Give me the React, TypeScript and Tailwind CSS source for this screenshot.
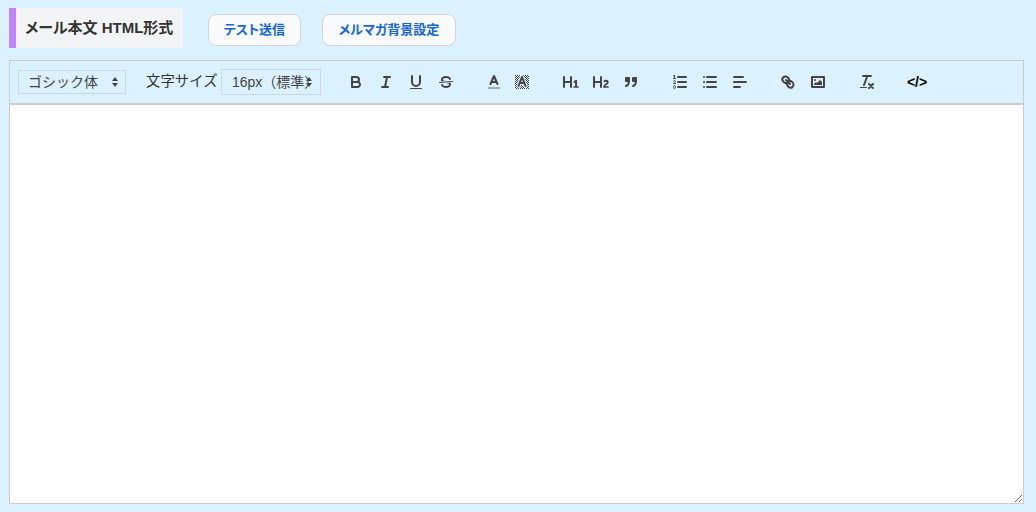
const jpFont = "font-['Liberation_Sans','Noto_Sans_CJK_JP',sans-serif]";

function Icon({ children, className = '' }: { children: React.ReactNode; className?: string }) {
  return (
    <svg
      viewBox="0 0 18 18"
      className={`h-[18px] w-[18px] fill-none stroke-[#444] stroke-2 [stroke-linecap:round] [stroke-linejoin:round] ${className}`}
    >
      {children}
    </svg>
  );
}

function ToolButton({ children, narrow }: { children: React.ReactNode; narrow?: boolean }) {
  return (
    <button type="button" className={`flex h-6 items-center justify-center ${narrow ? 'w-7' : 'w-[30px]'}`}>
      {children}
    </button>
  );
}

function SelectArrows({ className }: { className: string }) {
  return (
    <svg viewBox="0 0 8 12" className={`pointer-events-none absolute h-3 w-2 fill-[#444] ${className}`}>
      <path d="M4 1 7 5H1Z" />
      <path d="M4 11 1 7h6Z" />
    </svg>
  );
}

export default function App() {
  return (
    <div className={`h-[512px] w-[1036px] overflow-hidden bg-[#dbf1fe] ${jpFont}`}>
      <div className="flex items-start pl-[9px] pt-2">
        <h2 className="flex h-10 w-[174px] items-center border-l-[7px] border-[#c084fc] bg-[#f3f4f6] pl-[9px] text-[15px] font-bold text-[#333] [font-feature-settings:'palt']">
          メール本文 HTML形式
        </h2>
        <button
          type="button"
          className="ml-[25px] mt-1.5 h-8 w-[93px] rounded-lg border border-[#d1d5db] bg-[#f8fafc] text-[13px] font-bold text-[#1565d8] [font-feature-settings:'palt']"
        >
          テスト送信
        </button>
        <button
          type="button"
          className="ml-[21px] mt-1.5 h-8 w-[134px] rounded-lg border border-[#d1d5db] bg-[#f8fafc] text-[13px] font-bold text-[#1565d8] [font-feature-settings:'palt']"
        >
          メルマガ背景設定
        </button>
      </div>

      <div className="ml-[9px] mt-3 w-[1015px]">
        <div className="flex h-11 items-center border border-[#ccc] pl-2">
          <div className="relative h-6 w-[108px]">
            <select className="h-full w-full appearance-none border border-[#ccd6e0] bg-transparent pl-[9px] text-sm text-[#444]">
              <option>ゴシック体</option>
            </select>
            <SelectArrows className="right-[7px] top-1.5" />
          </div>
          <span className="ml-5 w-[75px] whitespace-nowrap text-[14.4px] text-[#333]">文字サイズ</span>
          <div className="relative h-[26px] w-[100px]">
            <select className="h-full w-full appearance-none border border-[#ccd6e0] bg-transparent pl-2.5 text-sm text-[#444]">
              <option>16px（標準）</option>
            </select>
            <SelectArrows className="right-[8px] top-[7px]" />
          </div>

          <div className="ml-5 flex">
            <ToolButton>
              <Icon>
                <path d="M5,4H9.5A2.5,2.5,0,0,1,12,6.5v0A2.5,2.5,0,0,1,9.5,9H5A0,0,0,0,1,5,9V4A0,0,0,0,1,5,4Z" />
                <path d="M5,9h5.5A2.5,2.5,0,0,1,13,11.5v0A2.5,2.5,0,0,1,10.5,14H5a0,0,0,0,1,0,0V9A0,0,0,0,1,5,9Z" />
              </Icon>
            </ToolButton>
            <ToolButton>
              <Icon>
                <path d="M7 4h6M5 14h6M8 14l2-10" />
              </Icon>
            </ToolButton>
            <ToolButton>
              <Icon>
                <path d="M5,3V9a4.012,4.012,0,0,0,4,4H9a4.012,4.012,0,0,0,4-4V3" />
                <rect x="3" y="15" width="12" height="1" rx=".5" className="fill-[#444] stroke-none" />
              </Icon>
            </ToolButton>
            <ToolButton>
              <Icon>
                <path d="M15.5 8.5 2.5 9.5" className="stroke-1" />
                <path
                  className="fill-[#444] stroke-none"
                  d="M9.007,8C6.542,7.791,6,7.519,6,6.5,6,5.792,7.283,5,9,5c1.571,0,2.765.679,2.969,1.309a1,1,0,0,0,1.9-.617C13.356,4.106,11.354,3,9,3,6.2,3,4,4.538,4,6.5a3.2,3.2,0,0,0,.5,1.843Z"
                />
                <path
                  className="fill-[#444] stroke-none"
                  d="M8.984,10C11.457,10.208,12,10.479,12,11.5c0,.708-1.283,1.5-3,1.5-1.571,0-2.765-.679-2.969-1.309a1,1,0,1,0-1.9.617C4.644,13.894,6.646,15,9,15c2.8,0,5-1.538,5-3.5a3.2,3.2,0,0,0-.5-1.843Z"
                />
              </Icon>
            </ToolButton>
          </div>

          <div className="ml-[19px] flex">
            <ToolButton narrow>
              <Icon>
                <path d="M3 15h12" className="stroke-[#aaa] [stroke-linecap:butt]" />
                <path d="M5.5 11 9 3l3.5 8M11.63 9H6.38" />
              </Icon>
            </ToolButton>
            <ToolButton narrow>
              <Icon>
                <defs>
                  <pattern id="hatch" width="2" height="2" patternUnits="userSpaceOnUse">
                    <rect width="1" height="1" fill="#444" stroke="none" />
                    <rect x="1" y="1" width="1" height="1" fill="#444" stroke="none" />
                  </pattern>
                </defs>
                <rect x="2" y="2" width="14" height="14" className="fill-[url(#hatch)] stroke-none" />
                <path d="M5.5 13 9 4l3.5 9M11.4 10H6.6" className="stroke-[#dbf1fe] stroke-[4]" />
                <path d="M5.5 13 9 4l3.5 9M11.4 10H6.6" />
              </Icon>
            </ToolButton>
          </div>

          <div className="ml-5 flex">
            <ToolButton>
              <Icon>
                <path
                  className="fill-[#444] stroke-none"
                  d="M10,4V14a1,1,0,0,1-2,0V10H3v4a1,1,0,0,1-2,0V4A1,1,0,0,1,3,4V8H8V4a1,1,0,0,1,2,0Zm6.06787,9.209H14.98975V7.59863a.54085.54085,0,0,0-.605-.60547h-.62744a1.01119,1.01119,0,0,0-.748.29688L11.645,8.56641a.5435.5435,0,0,0-.022.8584l.28613.30762a.53861.53861,0,0,0,.84717.0332l.09912-.08789a1.2137,1.2137,0,0,0,.2417-.35254h.02246s-.01123.30859-.01123.60547V13.209H12.041a.54085.54085,0,0,0-.605.60547v.43945a.54085.54085,0,0,0,.605.60547h4.02686a.54085.54085,0,0,0,.605-.60547v-.43945A.54085.54085,0,0,0,16.06787,13.209Z"
                />
              </Icon>
            </ToolButton>
            <ToolButton>
              <Icon>
                <path
                  className="fill-[#444] stroke-none"
                  d="M16.73975,13.81445v.43945a.54085.54085,0,0,1-.605.60547H11.855a.58392.58392,0,0,1-.64893-.60547V14.0127c0-2.90527,3.39941-3.42187,3.39941-4.55469a.77675.77675,0,0,0-.84717-.78125,1.17684,1.17684,0,0,0-.83594.38477c-.2749.26367-.561.374-.85791.13184l-.4292-.34082c-.30811-.24219-.38525-.51758-.1543-.81445a2.97155,2.97155,0,0,1,2.45361-1.17676,2.45393,2.45393,0,0,1,2.68408,2.40918c0,2.45312-3.1792,2.92676-3.27832,3.93848h2.79443A.54085.54085,0,0,1,16.73975,13.81445ZM9,3A.99974.99974,0,0,0,8,4V8H3V4A1,1,0,0,0,1,4V14a1,1,0,0,0,2,0V10H8v4a1,1,0,0,0,2,0V4A.99974.99974,0,0,0,9,3Z"
                />
              </Icon>
            </ToolButton>
            <ToolButton>
              <Icon>
                <rect x="4" y="5" width="3" height="3" className="fill-[#444]" />
                <rect x="11" y="5" width="3" height="3" className="fill-[#444]" />
                <path d="M7,8c0,4.031-3,5-3,5" />
                <path d="M14,8c0,4.031-3,5-3,5" />
              </Icon>
            </ToolButton>
          </div>

          <div className="ml-[19px] flex">
            <ToolButton>
              <Icon>
                <path d="M7 4h8M7 9h8M7 14h8" />
                <path d="M2.5 5.5h2" className="stroke-1" />
                <path
                  className="fill-[#444] stroke-none"
                  d="M3.5,6A0.5,0.5,0,0,1,3,5.5V3.085l-0.276.138A0.5,0.5,0,0,1,2.053,3c-0.124-.247-0.023-0.324.224-0.447l1-.5A0.5,0.5,0,0,1,4,2.5v3A0.5,0.5,0,0,1,3.5,6Z"
                />
                <path className="stroke-1" d="M4.5,10.5h-2c0-.234,1.85-1.076,1.85-2.234A0.959,0.959,0,0,0,2.5,8.156" />
                <path
                  className="stroke-1"
                  d="M2.5,14.846a0.959,0.959,0,0,0,1.85-.109A0.7,0.7,0,0,0,3.75,14a0.688,0.688,0,0,0,.6-0.736,0.959,0.959,0,0,0-1.85-.109"
                />
              </Icon>
            </ToolButton>
            <ToolButton>
              <Icon>
                <path d="M6 4h9M6 9h9M6 14h9M3 4h0M3 9h0M3 14h0" />
              </Icon>
            </ToolButton>
            <ToolButton>
              <Icon>
                <path d="M3 4h9M3 9h12M3 14h6" />
              </Icon>
            </ToolButton>
          </div>

          <div className="ml-[18px] flex">
            <ToolButton>
              <Icon>
                <path d="M7 7l4 4" />
                <path d="M8.9,4.577a3.476,3.476,0,0,1,.36,4.679A3.476,3.476,0,0,1,4.577,8.9C3.185,7.5,2.444,6.329,3.9,4.577A3.476,3.476,0,0,1,8.9,4.577Z" />
                <path d="M13.423,9.1a3.476,3.476,0,0,0-4.679-.36,3.476,3.476,0,0,0,.36,4.679c1.392,1.392,2.5,2.167,4.319.686A3.476,3.476,0,0,0,13.423,9.1Z" />
              </Icon>
            </ToolButton>
            <ToolButton>
              <Icon>
                <rect x="3" y="4" width="12" height="10" />
                <circle cx="6" cy="7" r="1" className="fill-[#444] stroke-none" />
                <path d="M5 12v-1l2-2 1 1 3-3 2 2v3Z" className="fill-[#444] stroke-none" />
              </Icon>
            </ToolButton>
          </div>

          <div className="ml-[19px]">
            <ToolButton>
              <Icon>
                <path d="M5 3h8M6 12 9.35 3M11 11l4 4M15 11l-4 4" />
                <rect x="2" y="14" width="7" height="1" rx=".5" className="fill-[#444] stroke-none" />
              </Icon>
            </ToolButton>
          </div>

          <div className="ml-5">
            <ToolButton>
              <span className="text-sm font-bold text-black">&lt;/&gt;</span>
            </ToolButton>
          </div>
        </div>

        <textarea className="block h-[400px] w-full resize-y border border-[#ccc] bg-white outline-none" />
      </div>
    </div>
  );
}
